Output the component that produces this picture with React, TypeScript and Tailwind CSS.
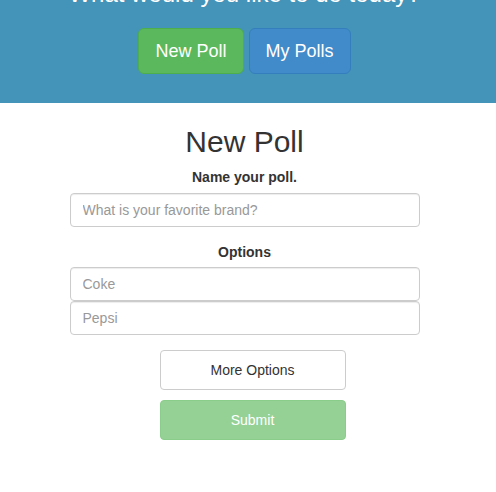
import React, { useState } from 'react'

const App: React.FC = () => {
  const [title, setTitle] = useState('')
  const [options, setOptions] = useState<string[]>(['', ''])
  const placeholders = ['Coke', 'Pepsi']

  return (
    <div className="min-h-[492px] bg-white font-['Liberation_Sans',Arial,sans-serif] text-[#333]">
      <div className="h-[103px] overflow-hidden bg-[#4493b8] pr-[7px]">
        <h3 className="mt-[-19px] text-center text-[24px] leading-[26px] text-white">
          What would you like to do today?
        </h3>
        <div className="mt-[21px] flex justify-center gap-[5px]">
          <button className="h-[46px] rounded-[6px] border border-[#4cae4c] bg-[#5cb85c] px-4 text-[18px] text-white">
            New Poll
          </button>
          <button className="h-[46px] rounded-[6px] border border-[#357ebd] bg-[#428bca] px-4 text-[18px] text-white">
            My Polls
          </button>
        </div>
      </div>

      <div className="flex justify-center pr-[7px]">
        <form className="w-[350px]" onSubmit={(e) => e.preventDefault()}>
          <h2 className="mt-[22px] text-center text-[30px] leading-[33px]">New Poll</h2>
          <label className="mt-[9px] block text-center text-[14px] font-bold leading-[20px]">
            Name your poll.
          </label>
          <input
            value={title}
            onChange={(e) => setTitle(e.target.value)}
            placeholder="What is your favorite brand?"
            className="mt-[6px] block h-[34px] w-full rounded-[4px] border border-[#ccc] px-3 text-[14px] shadow-[inset_0_1px_1px_rgba(0,0,0,0.075)] outline-none placeholder:text-[#999]"
          />
          <label className="mt-[15px] block text-center text-[14px] font-bold leading-[20px]">
            Options
          </label>
          <div className="mt-[5px] flex flex-col">
            {options.map((opt, i) => (
              <input
                key={i}
                value={opt}
                onChange={(e) => {
                  const next = [...options]
                  next[i] = e.target.value
                  setOptions(next)
                }}
                placeholder={placeholders[i] || 'Option ' + (i + 1)}
                className="block h-[34px] w-full rounded-[4px] border border-[#ccc] px-3 text-[14px] shadow-[inset_0_1px_1px_rgba(0,0,0,0.075)] outline-none placeholder:text-[#999]"
              />
            ))}
          </div>
          <div className="ml-[90px] flex w-[186px] flex-col">
            <button
              type="button"
              onClick={() => setOptions([...options, ''])}
              className="mt-[15px] h-[40px] rounded-[4px] border border-[#ccc] bg-white text-[14px] text-[#333]"
            >
              More Options
            </button>
            <button
              type="submit"
              disabled
              className="mt-[10px] h-[40px] rounded-[4px] border border-[#8acc8a] bg-[#95d195] text-[14px] text-white"
            >
              Submit
            </button>
          </div>
        </form>
      </div>
    </div>
  )
}

export default App
